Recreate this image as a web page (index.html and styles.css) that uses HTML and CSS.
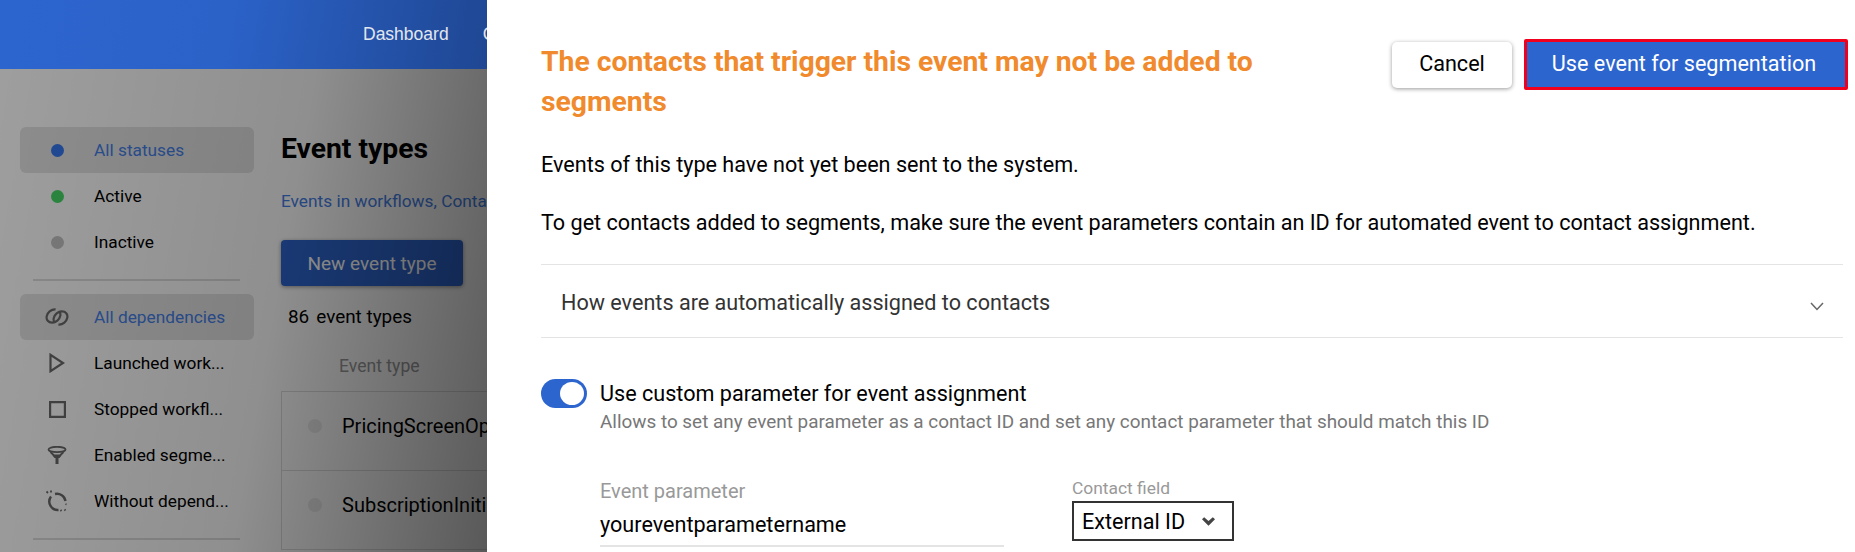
FILE: index.html
```html
<!DOCTYPE html>
<html lang="en">
<head>
    <meta charset="UTF-8">
    <title>Event types</title>
    <link rel="stylesheet" href="styles.css">
</head>
<body>
    <div class="page">
        <header class="topbar">
            <nav class="topnav">
                <a>Dashboard</a>
                <a>Contacts</a>
            </nav>
        </header>
        <div class="content">
            <aside class="sidebar">
                <ul class="filters">
                    <li class="filter selected"><span class="filter-icon"><i class="dot blue"></i></span><span class="filter-name">All statuses</span></li>
                    <li class="filter"><span class="filter-icon"><i class="dot green"></i></span><span class="filter-name">Active</span></li>
                    <li class="filter"><span class="filter-icon"><i class="dot gray"></i></span><span class="filter-name">Inactive</span></li>
                </ul>
                <hr class="filter-line">
                <ul class="filters">
                    <li class="filter selected">
                        <span class="filter-icon">
                            <svg width="24" height="22" viewBox="0 0 24 22" fill="none" stroke="#6a6a6a" stroke-width="2.200"><ellipse cx="8.500" cy="10" rx="7.500" ry="6" transform="rotate(-40 8.500 10)" pathLength="100" stroke-dasharray="90 10"/><ellipse cx="8.500" cy="10" rx="7.500" ry="6" transform="rotate(180 12 11) rotate(-40 8.500 10)" pathLength="100" stroke-dasharray="90 10"/></svg>
                        </span>
                        <span class="filter-name">All dependencies</span>
                    </li>
                    <li class="filter">
                        <span class="filter-icon">
                            <svg width="16" height="20" viewBox="0 0 16 20" fill="none" stroke="#6a6a6a" stroke-width="2.200"><path d="M1.500 1.800v16.400L14 10z"/></svg>
                        </span>
                        <span class="filter-name">Launched work...</span>
                    </li>
                    <li class="filter">
                        <span class="filter-icon">
                            <svg width="17" height="17" viewBox="0 0 17 17" fill="none" stroke="#6a6a6a" stroke-width="2.200"><path d="M1.100 1.100h14.800v14.800H1.100z"/></svg>
                        </span>
                        <span class="filter-name">Stopped workfl...</span>
                    </li>
                    <li class="filter">
                        <span class="filter-icon">
                            <svg width="20" height="18" viewBox="0 0 20 18" fill="none" stroke="#6a6a6a" stroke-width="1.800"><ellipse cx="10" cy="3.500" rx="8.500" ry="2.700"/><path d="M3.500 6 7 9.500h6L16.500 6"/><path d="M5.500 9.500h9l-2 2.500h-1v6h-3v-6h-1z" fill="#6a6a6a" stroke="none"/></svg>
                        </span>
                        <span class="filter-name">Enabled segme...</span>
                    </li>
                    <li class="filter">
                        <span class="filter-icon">
                            <svg width="22" height="22" viewBox="0 0 22 22" fill="none" stroke="#6a6a6a" stroke-width="2.400"><path d="M5 6.500A8.500 8.500 0 0 0 12.500 20"/><path d="M9 4a8.500 8.500 0 0 1 10.500 7"/><path d="M.5 1.500l1.500 1.500M5 .5v2M19.500 14l1 .5M14.500 20l1 1M18.500 19.500l1 1" stroke-width="1.800"/></svg>
                        </span>
                        <span class="filter-name">Without depend...</span>
                    </li>
                </ul>
                <hr class="filter-line">
            </aside>
            <main class="events">
                <h1>Event types</h1>
                <p class="event-links">Events in workflows, Contacts</p>
                <button class="new-btn">New event type</button>
                <p class="event-count"><b>86</b>event types</p>
                <div class="col-head">Event type</div>
                <div class="event-table">
                    <div class="event-row"><i class="row-dot"></i>PricingScreenOpened</div>
                    <div class="event-row"><i class="row-dot"></i>SubscriptionInitiated</div>
                </div>
            </main>
        </div>
    </div>
    <div class="shade"></div>

    <section class="panel">
        <div class="panel-top">
            <h2>The contacts that trigger this event may not be added to segments</h2>
            <div class="panel-actions">
                <button class="btn-cancel">Cancel</button>
                <button class="btn-use">Use event for segmentation</button>
            </div>
        </div>
        <p class="note first">Events of this type have not yet been sent to the system.</p>
        <p class="note">To get contacts added to segments, make sure the event parameters contain an ID for automated event to contact assignment.</p>
        <div class="accordion">
            <span>How events are automatically assigned to contacts</span>
            <svg width="14" height="9" viewBox="0 0 14 9" fill="none" stroke="#666" stroke-width="1.500"><path d="M1 1l6 6.500L13 1"/></svg>
        </div>
        <div class="switch-row">
            <span class="switch"><i></i></span>
            <div>
                <div class="switch-title">Use custom parameter for event assignment</div>
                <div class="switch-desc">Allows to set any event parameter as a contact ID and set any contact parameter that should match this ID</div>
            </div>
        </div>
        <div class="fields">
            <div class="field-param">
                <label>Event parameter</label>
                <div class="param-value">youreventparametername</div>
            </div>
            <div class="field-contact">
                <label>Contact field</label>
                <div class="select-box">External ID
                    <svg width="13" height="9" viewBox="0 0 12 8" fill="#444"><path d="M0 2 2 0 6 3.500 10 0l2 2-6 6z"/></svg>
                </div>
            </div>
        </div>
    </section>
</body>
</html>
```

FILE: styles.css
```css
* {
    box-sizing: border-box;
}
html, body {
    height: 100%;
}
body {
    margin: 0;
    overflow: hidden;
    position: relative;
    background-color: #fff;
    color: #000;
    font-family: Roboto, "Liberation Sans", sans-serif;
}
ul {
    list-style: none;
    margin: 0;
    padding: 0;
}

.page {
    height: 552px;
    overflow: hidden;
}
.topbar {
    height: 69px;
    background: linear-gradient(100deg, #2d65cf 0, #2b62c8 230px, #1f4793 490px);
    display: flex;
    padding-left: 363px;
    align-items: center;
}
.topnav {
    display: flex;
    gap: 34px;
    font-family: "Liberation Sans", Arial, sans-serif;
    font-size: 17.500px;
    color: #e2e6ee;
}
.content {
    display: flex;
    padding: 58px 0 0 20px;
}
.sidebar {
    width: 234px;
    flex: none;
}
.filter {
    height: 46px;
    display: flex;
    align-items: center;
    border-radius: 6px;
    font-size: 17.300px;
}
.filter.selected {
    background-color: #e4e4e4;
    color: #4480e8;
}
.filter-icon {
    width: 74px;
    display: flex;
    justify-content: center;
    align-items: center;
    flex: none;
}
.dot {
    width: 13px;
    height: 13px;
    border-radius: 50%;
}
.dot.blue { background-color: #3678f0; }
.dot.green { background-color: #45da67; }
.dot.gray { background-color: #c4c4c4; }
.filter-line {
    margin: 14px 14px 13px 13px;
    border: 0;
    border-top: 2px solid #ddd;
}

.events {
    margin-left: 27px;
    flex: 1;
}
.events h1 {
    margin: 5px 0 0;
    font-size: 28.300px;
    line-height: 34px;
    font-weight: 700;
}
.event-links {
    margin: 25px 0 0;
    font-size: 17.300px;
    line-height: 20px;
    color: #4480e8;
}
.new-btn {
    display: block;
    margin-top: 29px;
    width: 182px;
    height: 46px;
    border: 0;
    border-radius: 4px;
    background-color: #2d65cf;
    color: #fff;
    font-family: inherit;
    font-size: 19px;
    box-shadow: 0 1px 4px rgba(0, 0, 0, 0.4);
}
.event-count {
    margin: 20px 0 0 7px;
    font-size: 18.900px;
    line-height: 22px;
}
.event-count b {
    font-weight: 400;
    margin-right: 7px;
}
.col-head {
    margin: 28px 0 0 58px;
    font-size: 17.600px;
    line-height: 20px;
    color: #999;
}
.event-table {
    margin-top: 15px;
    border: 1px solid #ddd;
    border-bottom: 0;
}
.event-row {
    height: 79px;
    padding: 19px 0 0 26px;
    display: flex;
    gap: 20px;
    font-size: 20px;
    line-height: 30px;
    border-bottom: 1px solid #ddd;
    align-items: flex-start;
}
.row-dot {
    width: 14px;
    height: 14px;
    margin-top: 8px;
    border-radius: 50%;
    background-color: #ececec;
}

/* dark layer between page and panel */
.shade {
    position: absolute;
    inset: 69px auto 0 0;
    width: 487px;
    background: linear-gradient(100deg, rgba(0, 0, 0, 0.38) 0, rgba(0, 0, 0, 0.44) 55%, rgba(0, 0, 0, 0.65) 100%);
}

.panel {
    position: absolute;
    top: 0;
    bottom: 0;
    left: 487px;
    right: 0;
    background-color: #fff;
    padding: 39px 12px 0 54px;
}
.panel-top {
    display: flex;
    justify-content: space-between;
    align-items: flex-start;
    min-height: 78px;
}
.panel-top h2 {
    margin: 3px 0 0;
    width: 760px;
    font-size: 28.300px;
    line-height: 40px;
    font-weight: 700;
    color: #f08a2c;
}
.panel-actions {
    display: flex;
    align-items: center;
    gap: 12px;
    margin-right: -5px;
}
.btn-cancel {
    width: 120px;
    height: 46px;
    border: 0;
    border-radius: 5px;
    padding: 0 0 2px;
    background-color: #fff;
    font-family: inherit;
    font-size: 21.600px;
    color: #000;
    box-shadow: 0 1px 4px rgba(0, 0, 0, 0.4);
}
.btn-use {
    width: 324px;
    height: 51px;
    border: 3px solid #f0001c;
    border-radius: 2px;
    padding: 0 4px 2px 0;
    background-color: #2d65cf;
    font-family: inherit;
    font-size: 21.600px;
    color: #fff;
}
.note {
    margin: 30px 0 0;
    font-size: 21.600px;
    line-height: 28px;
}
.note.first {
    margin-top: 29px;
}
.accordion {
    margin-top: 27px;
    height: 74px;
    border-top: 1px solid #e4e4e4;
    border-bottom: 1px solid #e4e4e4;
    padding: 2px 19px 0 20px;
    display: flex;
    justify-content: space-between;
    align-items: center;
    font-size: 21.600px;
    color: #333;
}
.accordion svg {
    margin-top: 8px;
}
.switch-row {
    margin-top: 41px;
    display: flex;
    gap: 13px;
}
.switch {
    width: 46px;
    height: 29px;
    flex: none;
    border-radius: 15px;
    background-color: #2d65cf;
    padding: 3px 3px 3px 19px;
}
.switch i {
    display: block;
    width: 24px;
    height: 23px;
    border-radius: 50%;
    background-color: #fff;
}
.switch-title {
    font-size: 21.600px;
    line-height: 30px;
}
.switch-desc {
    font-size: 18.900px;
    line-height: 26px;
    color: #777;
}
.fields {
    margin: 44px 0 0 59px;
    display: flex;
    align-items: flex-start;
}
.field-param {
    width: 404px;
    margin-right: 68px;
    border-bottom: 2px solid #e4e4e4;
}
.field-param label {
    display: block;
    font-size: 20px;
    line-height: 24px;
    color: #999;
}
.param-value {
    margin-top: 7px;
    font-size: 21.600px;
    line-height: 30px;
    padding-bottom: 5px;
}
.field-contact {
    margin-top: -1px;
}
.field-contact label {
    display: block;
    margin-bottom: 3px;
    font-size: 17.400px;
    line-height: 20px;
    color: #999;
}
.select-box {
    width: 162px;
    height: 40px;
    border: 2px solid #333;
    padding: 0 17px 0 8px;
    display: flex;
    align-items: center;
    justify-content: space-between;
    font-size: 21.600px;
}
```
